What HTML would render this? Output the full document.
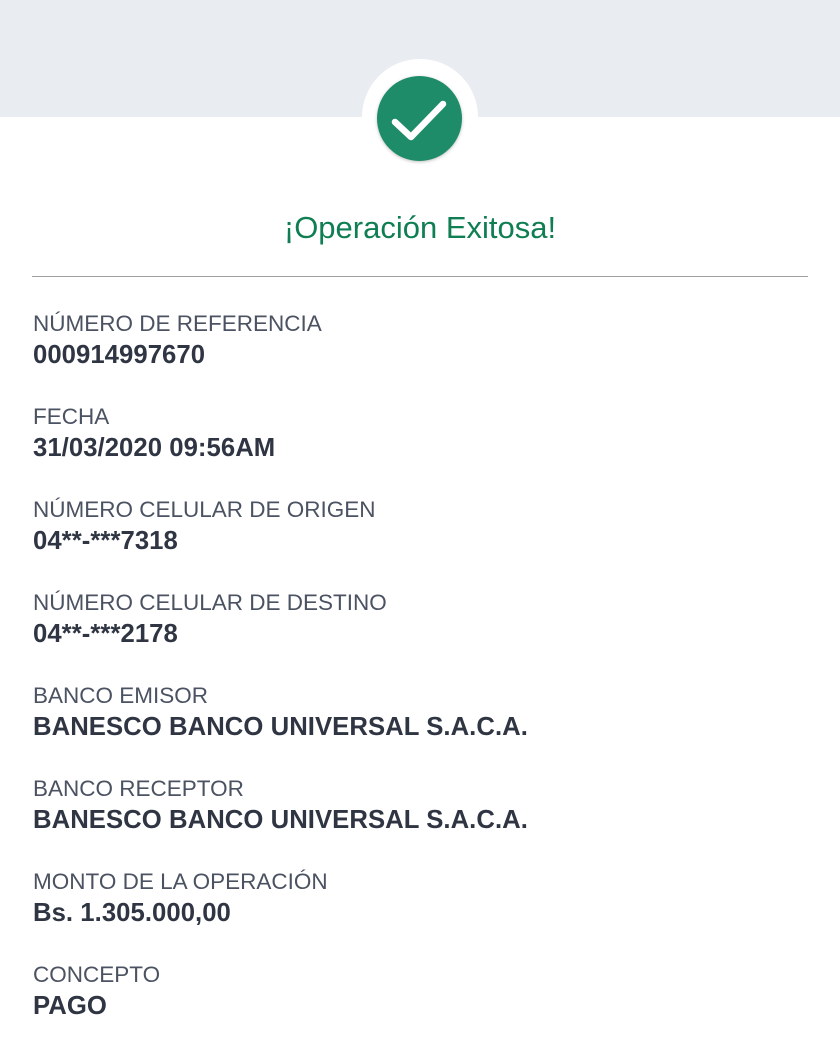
<!DOCTYPE html>
<html><head><meta charset="utf-8"><style>
body{margin:0;width:840px;height:1054px;background:#fff;font-family:"Liberation Sans",sans-serif;position:relative;overflow:hidden}
.top{position:absolute;left:0;top:0;width:840px;height:117px;background:#e9edf2}
.halo{position:absolute;left:362px;top:59px;width:116px;height:116px;border-radius:50%;background:#fff}
.chk{position:absolute;left:377px;top:76px;width:85px;height:85px;border-radius:50%;background:#1f8c69;box-shadow:0 1px 3px rgba(0,0,0,.25)}
.title{position:absolute;left:0;width:840px;top:210px;text-align:center;color:#0f7e52;font-size:31px}
.line{position:absolute;left:32px;top:276px;width:776px;height:1px;background:#a0a0a0}
.it{position:absolute;left:33px}
.l{font-size:22.5px;color:#4b5261;line-height:26px}
.v{font-size:25.7px;font-weight:bold;color:#2f3542;line-height:30px;margin-top:3px;letter-spacing:0.05px}
</style></head><body>
<div class="top"></div>
<div class="halo"></div>
<div class="chk"><svg width="85" height="85" viewBox="0 0 85 85"><path d="M18 46 L34 61 L66 28" fill="none" stroke="#fff" stroke-width="6.5" stroke-linecap="round" stroke-linejoin="round"/></svg></div>
<div class="title">¡Operación Exitosa!</div>
<div class="line"></div>
<div class="it" style="top:311px"><div class="l">NÚMERO DE REFERENCIA</div><div class="v">000914997670</div></div>
<div class="it" style="top:404px"><div class="l">FECHA</div><div class="v">31/03/2020 09:56AM</div></div>
<div class="it" style="top:497px"><div class="l">NÚMERO CELULAR DE ORIGEN</div><div class="v">04**-***7318</div></div>
<div class="it" style="top:590px"><div class="l">NÚMERO CELULAR DE DESTINO</div><div class="v">04**-***2178</div></div>
<div class="it" style="top:683px"><div class="l">BANCO EMISOR</div><div class="v">BANESCO BANCO UNIVERSAL S.A.C.A.</div></div>
<div class="it" style="top:776px"><div class="l">BANCO RECEPTOR</div><div class="v">BANESCO BANCO UNIVERSAL S.A.C.A.</div></div>
<div class="it" style="top:869px"><div class="l">MONTO DE LA OPERACIÓN</div><div class="v">Bs. 1.305.000,00</div></div>
<div class="it" style="top:962px"><div class="l">CONCEPTO</div><div class="v">PAGO</div></div>
</body></html>
